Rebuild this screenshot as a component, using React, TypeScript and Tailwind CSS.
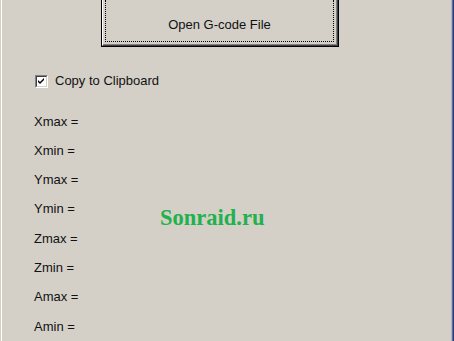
import React, { useState } from 'react';

const labels = ['Xmax =', 'Xmin =', 'Ymax =', 'Ymin =', 'Zmax =', 'Zmin =', 'Amax =', 'Amin ='];

const App: React.FC = () => {
  const [copy, setCopy] = useState(true);

  return (
    <div
      className="relative flex w-[454px] h-[341px] overflow-hidden bg-[#d4d0c8] text-[13px] text-[#111]"
      style={{ fontFamily: '"Liberation Sans", Arial, sans-serif' }}
    >
      <div className="w-px bg-[#d4d0c8]" />
      <div className="w-px bg-white" />
      <div className="flex-1 flex flex-col">
        {/* default button, top edge scrolled out of view */}
        <button
          type="button"
          className="ml-[99px] w-[238px] h-[47px] border border-t-0 border-black bg-[#d4d0c8] flex"
        >
          <div className="flex-1 flex border-l border-white border-r border-b border-r-[#404040] border-b-[#404040]">
            <div className="flex-1 flex border-r border-b border-[#808080]">
              <div className="flex-1 mx-[2px] mb-[2px] border border-t-0 border-dotted border-black flex items-center justify-center pt-[9px]">
                Open G-code File
              </div>
            </div>
          </div>
        </button>

        <label className="ml-[33px] mt-[28px] flex items-center gap-[7px] h-[13px] cursor-default">
          <span
            onClick={() => setCopy(!copy)}
            className="w-[13px] h-[13px] bg-white border-l border-t border-[#808080] border-r border-b border-r-white border-b-white flex"
          >
            <span className="flex-1 border-l border-t border-[#404040] border-r border-b border-r-[#d4d0c8] border-b-[#d4d0c8] flex items-center justify-center">
              {copy && (
                <svg width="7" height="7" viewBox="0 0 7 7">
                  <path d="M0 2 L2 4 L6 0 L6 2 L2 6 L0 4 Z" fill="#000" />
                </svg>
              )}
            </span>
          </span>
          <span>Copy to Clipboard</span>
        </label>

        <div className="ml-[32px] mt-[19px] flex flex-col">
          {labels.map(l => (
            <div key={l} className="h-[29.3px] flex items-center">
              {l}
            </div>
          ))}
        </div>
      </div>
      <div className="w-px bg-[#b4b4bc]" />
      <div className="w-px bg-[#5c6c9c]" />
      <div className="w-px bg-[#2a3c80]" />

      <div
        className="absolute left-[160px] top-[205px] text-[22.5px] font-bold text-[#22b14c] leading-[26px]"
        style={{ fontFamily: '"Liberation Serif", "Times New Roman", serif' }}
      >
        Sonraid.ru
      </div>
    </div>
  );
};

export default App;
